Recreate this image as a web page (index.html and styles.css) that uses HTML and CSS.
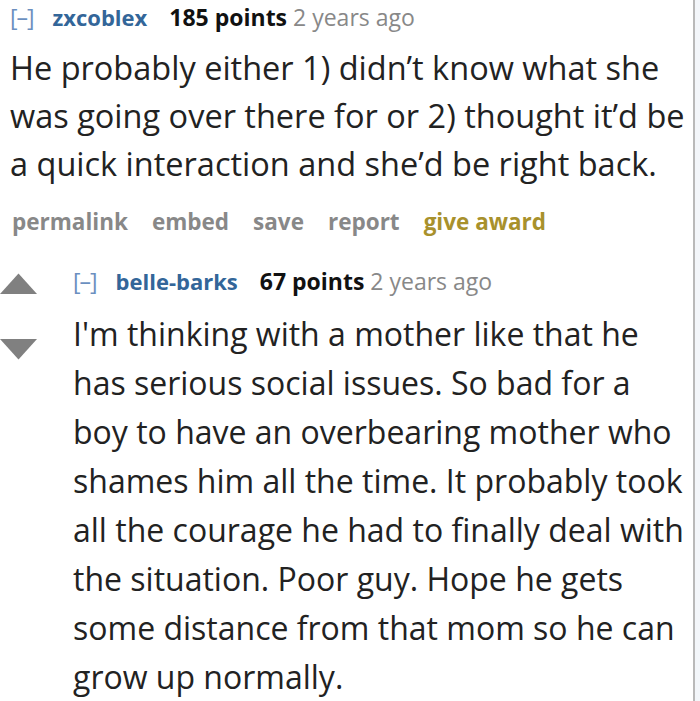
FILE: index.html
```html
<!DOCTYPE html>
<html lang="en">
<head>
<meta charset="utf-8">
<title>Comments</title>
<link rel="stylesheet" href="styles.css">
</head>
<body>
<div class="page">
  <div class="thread">
    <div class="comment">
      <div class="tagline">
        <span class="toggle">[–]</span>
        <span class="author">zxcoblex</span>
        <span class="score">185 points</span>
        <span class="time">2 years ago</span>
      </div>
      <div class="body">He probably either 1) didn’t know what she was going over there for or 2) thought it’d be a quick interaction and she’d be right back.</div>
      <ul class="buttons">
        <li>permalink</li>
        <li>embed</li>
        <li>save</li>
        <li>report</li>
        <li class="award">give award</li>
      </ul>
    </div>
    <div class="child">
      <div class="votes">
        <svg class="arrow up" width="38" height="21" viewBox="0 0 38 21"><polygon points="0,21 18.5,0.5 37,21" fill="#808080"/></svg>
        <svg class="arrow down" width="38" height="21" viewBox="0 0 38 21"><polygon points="0,0 37,0 18.5,20.5" fill="#808080"/></svg>
      </div>
      <div class="comment nested">
        <div class="tagline">
          <span class="toggle">[–]</span>
          <span class="author">belle-barks</span>
          <span class="score">67 points</span>
          <span class="time">2 years ago</span>
        </div>
        <div class="body">I'm thinking with a mother like that he has serious social issues. So bad for a boy to have an overbearing mother who shames him all the time. It probably took all the courage he had to finally deal with the situation. Poor guy. Hope he gets some distance from that mom so he can grow up normally.</div>
      </div>
    </div>
  </div>
  <div class="side"></div>
</div>
</body>
</html>
```
FILE: styles.css
```css
html, body {
  margin: 0;
  padding: 0;
  background: #ffffff;
}
.page {
  display: flex;
  width: 700px;
  min-height: 701px;
  font-family: "Open Sans", "Noto Sans", sans-serif;
}
.thread {
  width: 695px;
  border-right: 2px solid #b9b9b9;
  box-sizing: border-box;
  padding-left: 10px;
}
.side {
  flex: 1;
  background: #f3f6fa;
}
.tagline {
  font-size: 23px;
  line-height: 34px;
  height: 34px;
  white-space: nowrap;
}
.toggle {
  color: #6b8fbf;
  font-weight: 400;
  margin-right: 13px;
  letter-spacing: -1px;
}
.author {
  color: #336699;
  font-weight: 700;
  font-size: 22px;
  margin-right: 16px;
}
.score {
  color: #111111;
  font-weight: 700;
}
.time {
  color: #888888;
}
.body {
  color: #222222;
  font-size: 32.5px;
  line-height: 48px;
  padding-top: 10px;
}
.buttons {
  list-style: none;
  margin: 0;
  padding: 14px 0 0 2px;
  display: flex;
  gap: 24px;
  font-size: 22.5px;
  line-height: 40px;
  font-weight: 700;
  color: #888888;
}
.buttons .award {
  color: #a8912c;
}
.child {
  display: flex;
  margin-left: -10px;
  padding-top: 22px;
}
.votes {
  width: 73px;
  flex: none;
  display: flex;
  flex-direction: column;
  padding-top: 9px;
  gap: 45px;
}
.arrow {
  display: block;
}
.nested .body {
  font-size: 32px;
  line-height: 49px;
  padding-top: 11px;
}
```
